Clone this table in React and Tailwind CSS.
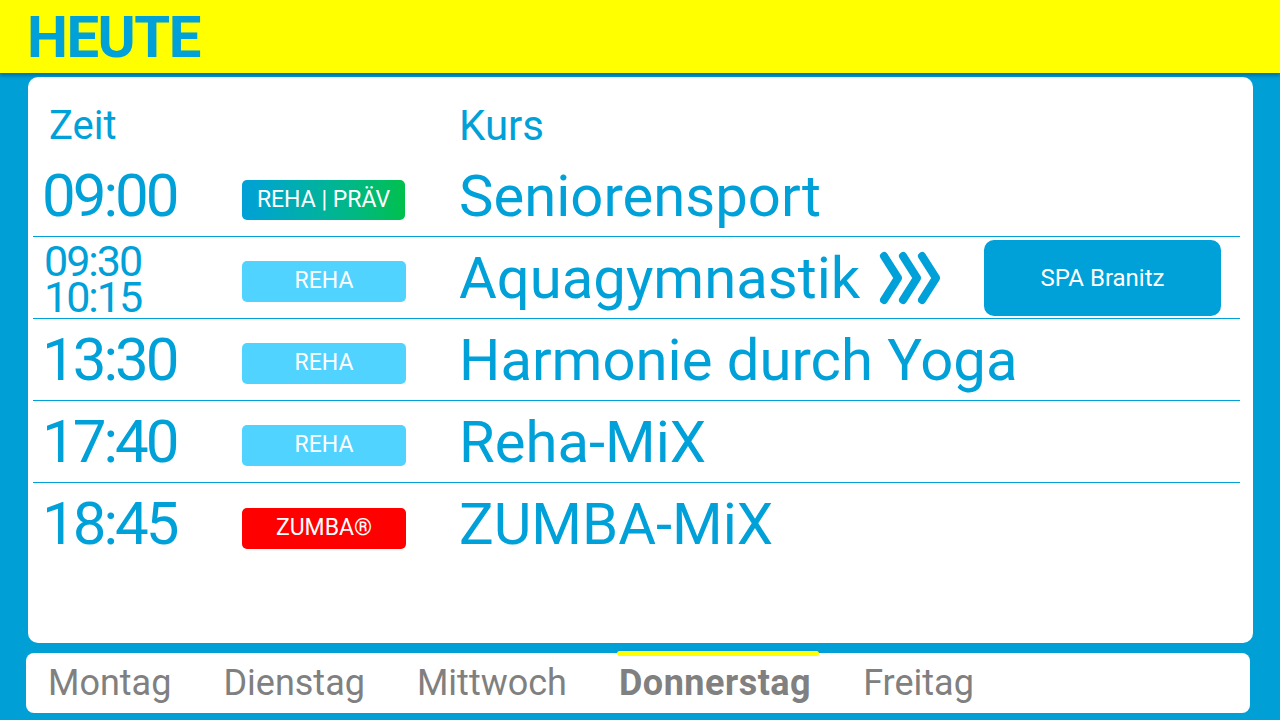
import React from "react";

const font = { fontFamily: "Roboto, 'Liberation Sans', sans-serif" };

function Chevrons() {
  return (
    <svg width="70" height="56" viewBox="0 0 70 56" className="ml-[18px] shrink-0">
      <g fill="none" stroke="#00a0d8" strokeWidth="8" strokeLinecap="round" strokeLinejoin="round">
        <path d="M6 6 L20 28 L6 50" />
        <path d="M25 6 L39 28 L25 50" />
        <path d="M44 6 L58 28 L44 50" />
      </g>
    </svg>
  );
}

function Badge({ kind }) {
  if (kind === "both")
    return (
      <div className="w-[163px] h-[40px] rounded-[5px] bg-gradient-to-r from-[#00a0d8] to-[#00c04b] text-white text-[23px] flex items-center justify-center">
        REHA | PRÄV
      </div>
    );
  if (kind === "zumba")
    return (
      <div className="w-[164px] h-[41px] rounded-[5px] bg-[#ff0000] text-white text-[23px] flex items-center justify-center">
        ZUMBA®
      </div>
    );
  return (
    <div className="w-[164px] h-[41px] rounded-[5px] bg-[#50d3ff] text-white text-[23px] flex items-center justify-center">
      REHA
    </div>
  );
}

const rows = [
  { time: ["09:00"], badge: "both", name: "Seniorensport" },
  { time: ["09:30", "10:15"], badge: "reha", name: "Aquagymnastik", spa: true },
  { time: ["13:30"], badge: "reha", name: "Harmonie durch Yoga" },
  { time: ["17:40"], badge: "reha", name: "Reha-MiX" },
  { time: ["18:45"], badge: "zumba", name: "ZUMBA-MiX", last: true },
];

const days = ["Montag", "Dienstag", "Mittwoch", "Donnerstag", "Freitag"];

export default function App() {
  return (
    <div className="w-[1280px] h-[720px] bg-[#009fd6] flex flex-col overflow-hidden text-[#00a0d8]" style={font}>
      <div className="h-[73px] bg-[#ffff00] pl-[27px] flex items-center shadow-[0_3px_3px_rgba(0,70,110,0.45)] relative z-10">
        <span className="text-[58px] font-bold leading-none tracking-[-1.5px]">HEUTE</span>
      </div>

      <div className="mt-[4px] ml-[28px] w-[1225px] h-[566px] bg-white rounded-[10px] pl-[5px] pr-[13px]">
        <div className="h-[79px] flex items-center pt-[18px]">
          <div className="w-[426px] pl-[16px] text-[40px]">Zeit</div>
          <div className="text-[42px]">Kurs</div>
        </div>
        {rows.map((r, i) => (
          <div
            key={i}
            className={`${i === 0 ? "h-[81px]" : "h-[82px]"} flex items-center ${r.last ? "" : "border-b border-[color:#00a0d8]"}`}
          >
            <div className="w-[209px] pl-[9px]">
              {r.time.length === 1 ? (
                <span className="text-[60px] leading-none tracking-[-3px]">{r.time[0]}</span>
              ) : (
                <div className="text-[43px] leading-[36px] tracking-[-2px] pl-[2px] pt-[3px]">
                  {r.time[0]}
                  <br />
                  {r.time[1]}
                </div>
              )}
            </div>
            <div className="w-[217px] mt-[8px]">
              <Badge kind={r.badge} />
            </div>
            <div className="flex-1 flex items-center">
              <span className="text-[58px] leading-none">{r.name}</span>
              {r.spa && (
                <>
                  <Chevrons />
                  <div className="ml-auto mr-[19px] w-[237px] h-[76px] rounded-[10px] bg-[#00a0d8] text-white text-[24px] flex items-center justify-center">
                    SPA Branitz
                  </div>
                </>
              )}
            </div>
          </div>
        ))}
      </div>

      <div className="mt-[10px] ml-[26px] w-[1224px] h-[60px] bg-white rounded-[8px] flex items-center pl-[22px] gap-[52px] relative">
        {days.map((d) => (
          <div key={d} className="relative">
            {d === "Donnerstag" && (
              <div className="absolute left-[-2px] right-[-8px] top-[-5px] h-[5px] rounded-full bg-[#ffff00]" />
            )}
            <span className={`text-[36px] text-[#808080] ${d === "Donnerstag" ? "font-bold tracking-[0.5px]" : ""}`}>{d}</span>
          </div>
        ))}
      </div>
    </div>
  );
}
